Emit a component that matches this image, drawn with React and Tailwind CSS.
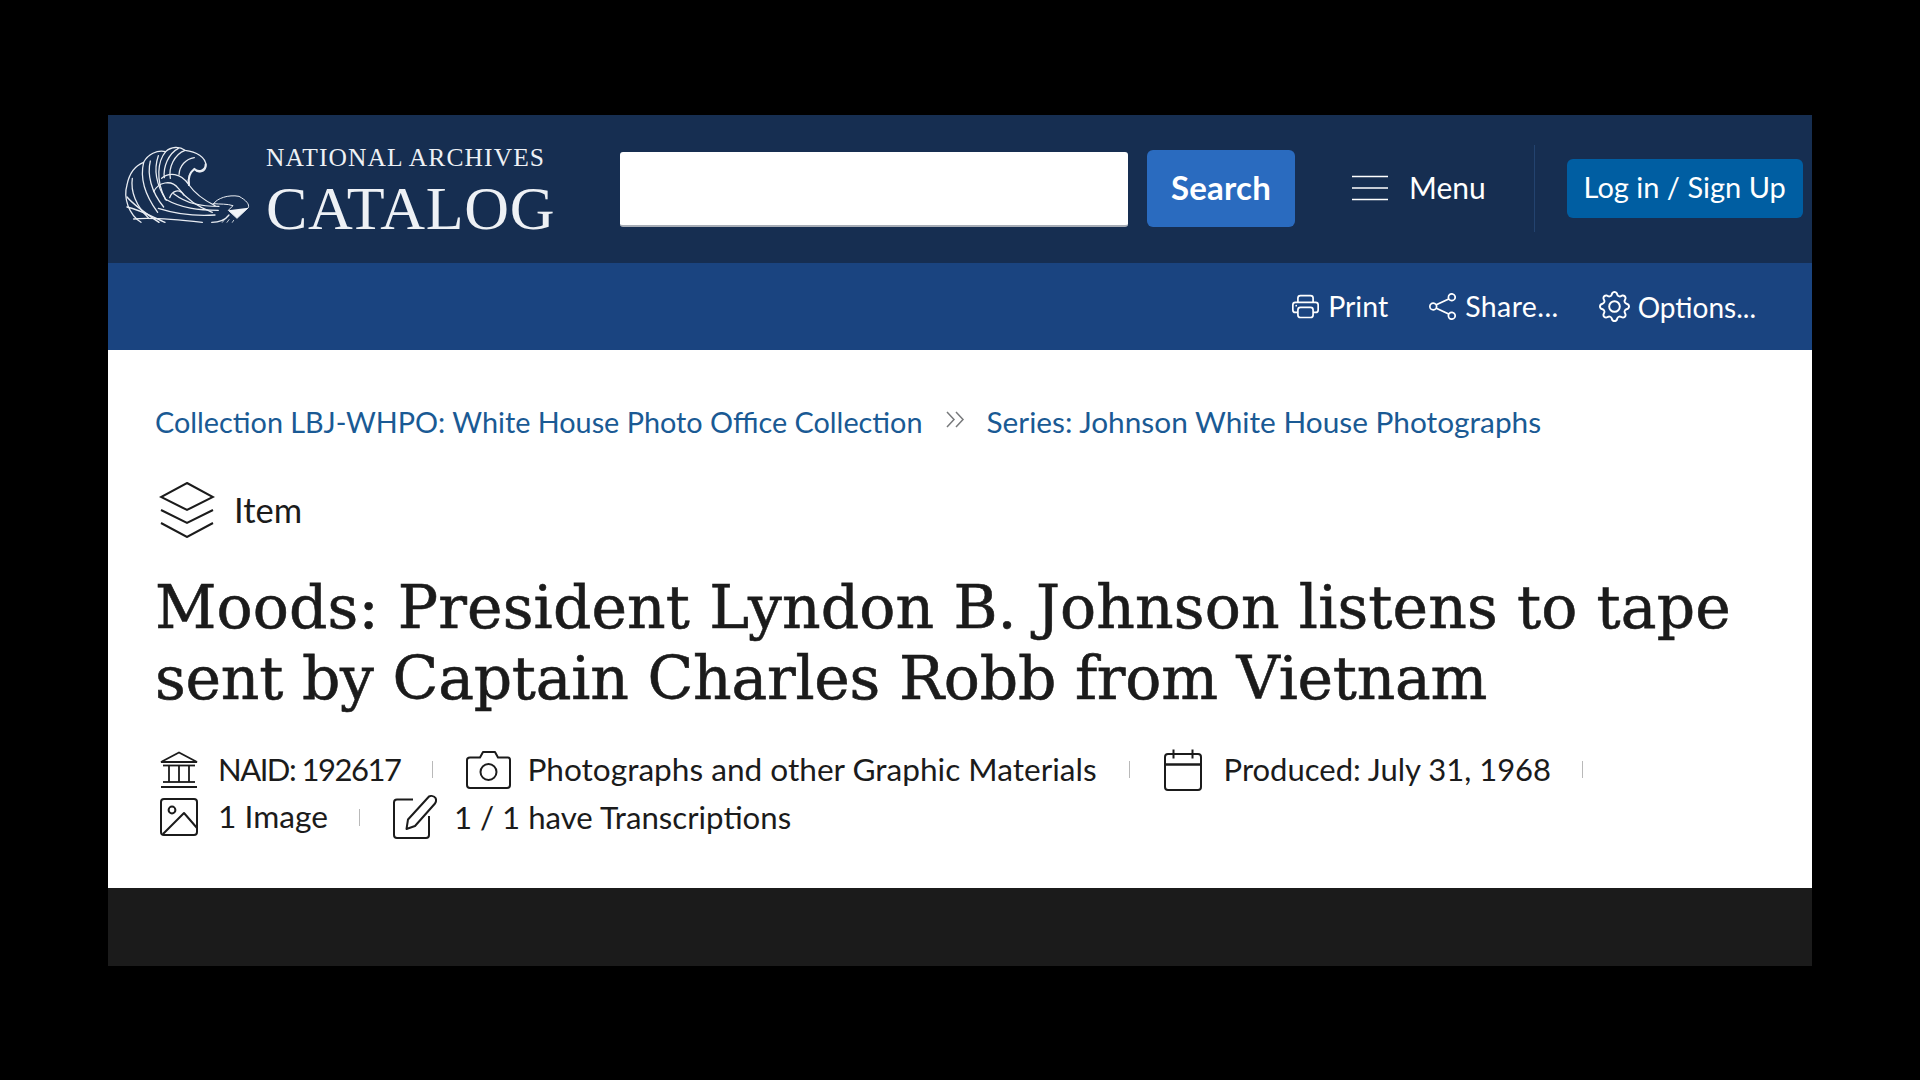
import React from "react";
import { BsPrinter, BsShare, BsGear } from "react-icons/bs";

const Sep = ({ className }) => <span className={`block w-px h-[17px] bg-[#b9b9b9] shrink-0 ${className}`} />;

const Logo = () => (
  <svg viewBox="0 0 450 300" className="w-[150px] h-[100px] shrink-0" fill="none" stroke="#e9edf3" strokeWidth="3.8" strokeLinecap="round">
    <path d="M78 262C42 238 24 190 36 150C42 118 60 92 86 82C98 58 126 44 152 50C168 34 194 34 210 46C244 50 272 66 273 92C272 112 248 116 238 102C226 110 216 128 222 150" />
    <path d="M272 88C272 108 250 114 238 102C228 110 218 126 222 150" strokeWidth="6" />
    <path d="M86 82C76 122 84 172 128 232" />
    <path d="M152 50C128 78 122 136 150 190" />
    <path d="M210 46C178 58 160 98 166 130" />
    <path d="M238 68C212 72 194 92 192 118" />
    <path d="M190 40C160 56 144 96 148 128" />
    <path d="M52 130C46 170 64 214 100 248" />
    <path d="M106 78C96 118 108 170 146 216" />
    <path d="M130 62C116 102 124 150 154 196" />
    <path d="M140 130C160 112 198 112 222 150C240 176 268 196 300 212" />
    <path d="M116 170C130 142 168 132 190 160C214 192 250 216 292 232" />
    <path d="M164 188C172 166 194 160 206 180" />
    <path d="M36 186C60 214 100 240 132 262" strokeWidth="4.4" />
    <path d="M36 216C80 226 120 250 150 262" strokeWidth="4.4" />
    <path d="M56 252C110 246 190 254 262 262" />
    <path d="M130 220C180 236 240 244 300 240" />
    <path d="M150 192C200 220 250 226 310 226" />
    <path d="M176 176C216 206 256 214 312 214" />
    <path d="M290 262C310 262 330 256 342 240" />
    <path d="M296 206C306 190 340 178 372 184C394 196 404 208 400 218L366 250L340 226L354 212C336 206 316 208 296 206Z" strokeWidth="3" />
    <path d="M340 226L400 218L366 250Z" fill="#f1f4f8" stroke="none" />
    <path d="M322 262L330 252M336 262L342 254M352 262L356 256" strokeWidth="2.4" />
  </svg>
);

const IconList = () => (
  <svg viewBox="0 0 36 26" className="w-[36px] h-[26px] shrink-0" stroke="#fff" strokeWidth="1.7" fill="none">
    <path d="M0 1.5H36M0 13H36M0 24.5H36" />
  </svg>
);
const Chevrons = () => (
  <svg viewBox="0 0 20 17" className="w-[20px] h-[17px] shrink-0 mt-[8px]" fill="none" stroke="#77797b" strokeWidth="1.5">
    <path d="M2 1L9 8.5L2 16M11 1L18 8.5L11 16" />
  </svg>
);
const Layers = () => (
  <svg viewBox="0 0 56 56" className="w-[56px] h-[56px] shrink-0" fill="none" stroke="#1b1b1b" strokeWidth="2" strokeLinejoin="miter">
    <path d="M28 1L54 15L28 28L2 15Z" />
    <path d="M2 28L28 41L54 28" />
    <path d="M2 41L28 55L54 41" />
  </svg>
);
const Bank = () => (
  <svg viewBox="0 0 38 38" className="w-[38px] h-[38px] shrink-0" fill="none" stroke="#1b1b1b" strokeWidth="1.8">
    <path d="M1 11L19 1.5L37 11Z" strokeWidth="1.8" />
    <path d="M3 14.5H35" />
    <path d="M9 15V31M19 15V31M29 15V31" />
    <path d="M3 31H35" />
    <path d="M1 36H37" strokeWidth="2" />
  </svg>
);
const Camera = () => (
  <svg viewBox="0 0 45 38" className="w-[45px] h-[38px] shrink-0" fill="none" stroke="#1b1b1b" strokeWidth="2" strokeLinejoin="round">
    <path d="M4 6.5H14L17 1H29L32 6.5H42C43 6.5 44 7.5 44 9V34C44 36 43 37 41 37H4C2 37 1 36 1 34V9C1 7.5 2 6.5 4 6.5Z" />
    <circle cx="22.5" cy="21" r="8" />
  </svg>
);
const Calendar = () => (
  <svg viewBox="0 0 38 42" className="w-[38px] h-[42px] shrink-0" fill="none" stroke="#1b1b1b" strokeWidth="2">
    <rect x="1" y="5" width="36" height="36" rx="3" />
    <path d="M1 15.5H37" strokeWidth="2.4" />
    <path d="M9.5 0.5V9.5M28.5 0.5V9.5" />
  </svg>
);
const Picture = () => (
  <svg viewBox="0 0 38 38" className="w-[38px] h-[38px] shrink-0" fill="none" stroke="#1b1b1b" strokeWidth="2" strokeLinejoin="round">
    <rect x="1" y="1" width="36" height="36" rx="3" />
    <circle cx="12" cy="12" r="3.4" />
    <path d="M3 36L24 15L37 30" />
  </svg>
);
const Pencil = () => (
  <svg viewBox="0 0 44 44" className="w-[44px] h-[44px] shrink-0" fill="none" stroke="#1b1b1b" strokeWidth="2" strokeLinejoin="round">
    <path d="M20 4.5H4C2 4.5 1 5.5 1 7.5V40C1 42 2 43 4 43H33C35 43 36 42 36 40V21" />
    <path d="M36 1.5C38 0.5 41 1 42.5 3C43.5 5 43 7 42 8.5L22 31L13.5 34L15 24.5Z" />
  </svg>
);

const body = "font-['Lato','Liberation_Sans',sans-serif]";

export default function App() {
  return (
    <div className={`min-h-screen bg-black pt-[115px] px-[108px] pb-[114px] ${body}`}>
      <header className="h-[148px] bg-[#162e51] flex items-center">
        <div className="ml-[7px] mt-[-8px]"><Logo /></div>
        <div className="ml-[1px] w-[300px] text-white font-['Liberation_Serif',serif] mt-[3px]">
          <div className="text-[25.5px] leading-[28px] tracking-[1.1px] text-[#eef1f5] whitespace-nowrap">NATIONAL ARCHIVES</div>
          <div className="text-[62px] leading-[60px] mt-[6px] tracking-[0.7px] text-[#eef1f5] whitespace-nowrap">CATALOG</div>
        </div>
        <div className="ml-[54px] w-[508px] h-[75px] bg-white rounded-[3px] border-b-2 border-[#a7adb6]" />
        <button className="ml-[19px] mb-[2px] w-[148px] h-[77px] pb-[1px] rounded-[6px] bg-[#2a6bbf] text-white font-bold text-[33px] tracking-[0.2px]">Search</button>
        <div className="ml-[57px] mb-[2px]"><IconList /></div>
        <span className="ml-[21px] mb-[4px] text-white text-[30px] whitespace-nowrap">Menu</span>
        <span className="ml-[48px] mb-[2px] w-px h-[87px] bg-[#23436f] shrink-0" />
        <button className="ml-[32px] mb-[2px] w-[236px] h-[59px] pb-[2px] rounded-[6px] bg-[#005ea2] text-white text-[29px] whitespace-nowrap">Log in / Sign Up</button>
      </header>

      <div className="h-[87px] bg-[#1a4480] flex items-center justify-end pr-[56px] text-white text-[28.5px]">
        <BsPrinter className="text-[27px] mr-[9px]" />
        <span>Print</span>
        <BsShare className="text-[27px] ml-[41px] mr-[9px]" />
        <span className="tracking-[0.4px]">Share...</span>
        <BsGear className="text-[31px] ml-[40px] mr-[8px]" />
        <span className="text-[28px]">Options...</span>
      </div>

      <main className="h-[538px] bg-white px-[47px] pt-[53px]">
        <div className="flex items-start text-[28.8px] leading-[38px] text-[#1a5a94] whitespace-nowrap">
          <span>Collection LBJ-WHPO: White House Photo Office Collection</span>
          <span className="ml-[22px] mr-[22px]"><Chevrons /></span>
          <span className="text-[29.8px]">Series: Johnson White House Photographs</span>
        </div>
        <div className="mt-[41px] flex items-center ml-[4px] text-[34.5px] text-[#1b1b1b]">
          <Layers />
          <span className="ml-[19px]">Item</span>
        </div>
        <h1 className="mt-[34px] font-['DejaVu_Serif',serif] text-[60px] leading-[71px] text-[#1b1b1b] [-webkit-text-stroke:0.6px_#1b1b1b]">
          <span className="tracking-[0.1px]">Moods: President Lyndon B. Johnson listens to tape </span>
          <span className="tracking-[-0.25px]">sent by Captain Charles Robb from Vietnam</span>
        </h1>
        <div className="mt-[32px] flex items-center h-[47px] text-[31px] text-[#1b1b1b] whitespace-nowrap">
          <span className="ml-[5px]"><Bank /></span>
          <span className="ml-[20px] tracking-[-1.5px]">NAID: 192617</span>
          <Sep className="ml-[32px]" />
          <span className="ml-[33px]"><Camera /></span>
          <span className="ml-[16px] text-[31.6px]">Photographs and other Graphic Materials</span>
          <Sep className="ml-[32px]" />
          <span className="ml-[34px]"><Calendar /></span>
          <span className="ml-[22px]">Produced: July 31, 1968</span>
          <Sep className="ml-[31px]" />
        </div>
        <div className="flex items-center h-[48px] text-[31.2px] text-[#1b1b1b] whitespace-nowrap">
          <span className="ml-[5px]"><Picture /></span>
          <span className="ml-[20px] text-[31.7px]">1 Image</span>
          <Sep className="ml-[31px]" />
          <span className="ml-[33px]"><Pencil /></span>
          <span className="ml-[17px]">1 / 1 have Transcriptions</span>
        </div>
      </main>

      <div className="h-[78px] bg-[#1b1b1b]" />
    </div>
  );
}
